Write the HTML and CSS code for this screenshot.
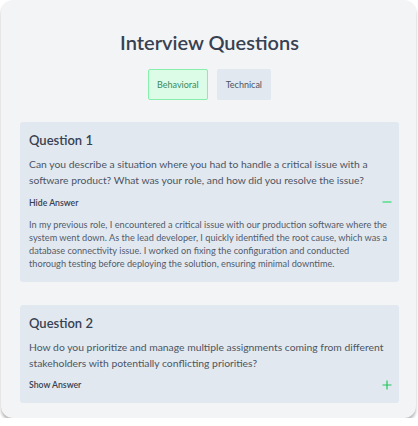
FILE: index.html
```html
<!DOCTYPE html>
<html>
<head>
<meta charset="utf-8">
<link rel="stylesheet" href="styles.css">
</head>
<body>
<div class="panel">
  <h1 class="title">Interview Questions</h1>
  <div class="tabs">
    <button class="tab tab-active">Behavioral</button>
    <button class="tab">Technical</button>
  </div>
  <div class="list">
    <div class="card">
      <h2 class="card-title">Question 1</h2>
      <p class="question">Can you describe a situation where you had to handle a critical issue with a software product? What was your role, and how did you resolve the issue?</p>
      <div class="toggle">
        <span class="toggle-label">Hide Answer</span>
        <svg class="icon" width="10" height="10" viewBox="0 0 10 10"><path d="M0.5 5H9.5" stroke="#4ade80" stroke-width="1.4"/></svg>
      </div>
      <p class="answer">In my previous role, I encountered a critical issue with our production software where the system went down. As the lead developer, I quickly identified the root cause, which was a database connectivity issue. I worked on fixing the configuration and conducted thorough testing before deploying the solution, ensuring minimal downtime.</p>
    </div>
    <div class="card">
      <h2 class="card-title">Question 2</h2>
      <p class="question">How do you prioritize and manage multiple assignments coming from different stakeholders with potentially conflicting priorities?</p>
      <div class="toggle">
        <span class="toggle-label">Show Answer</span>
        <svg class="icon" width="10" height="10" viewBox="0 0 10 10"><path d="M0.5 5H9.5M5 0.5V9.5" stroke="#22c55e" stroke-width="1.2"/></svg>
      </div>
    </div>
  </div>
</div>
</body>
</html>
```
FILE: styles.css
```css
* { box-sizing: border-box; }
html, body { margin: 0; padding: 0; background: #ffffff; }
body { font-family: Lato, "Noto Sans", sans-serif; }
.panel {
  margin-left: 1px;
  width: 415px;
  height: 418px;
  background: #f3f4f6;
  border-radius: 12px;
  box-shadow: 0 3px 3px rgba(0,0,0,0.28);
  padding: 28px 17px 0 19px;
}
.title {
  margin: 0;
  text-align: center;
  font-size: 20px;
  line-height: 28px;
  font-weight: 600;
  color: #374151;
}
.tabs {
  display: flex;
  justify-content: center;
  gap: 9px;
  margin-top: 13px;
}
.tab {
  font-family: inherit;
  font-size: 9px;
  height: 31px;
  padding: 0 8px;
  border: 1px solid #e2e8f0;
  border-radius: 2px;
  background: #e2e8f0;
  color: #4b5563;
}
.tab-active {
  background: #dcfce7;
  border-color: #86efac;
  color: #3b8a5e;
}
.list {
  display: flex;
  flex-direction: column;
  gap: 23px;
  margin-top: 22px;
}
.card {
  background: #e2e8f0;
  border-radius: 3px;
  padding: 9px 7px 12px 9px;
}
.card-title {
  margin: 0;
  font-size: 13px;
  line-height: 18px;
  font-weight: 600;
  color: #374151;
}
.question {
  margin: 7px 0 0;
  font-size: 10.35px;
  line-height: 16px;
  color: #4b5563;
}
.toggle {
  display: flex;
  justify-content: space-between;
  align-items: center;
  margin-top: 8px;
  height: 12px;
}
.toggle-label {
  font-size: 8.7px;
  font-weight: 600;
  color: #374151;
}
.icon { display: block; }
.answer {
  margin: 9.5px 4px 0 0;
  font-size: 9.2px;
  line-height: 13px;
  color: #525c6b;
}
```
